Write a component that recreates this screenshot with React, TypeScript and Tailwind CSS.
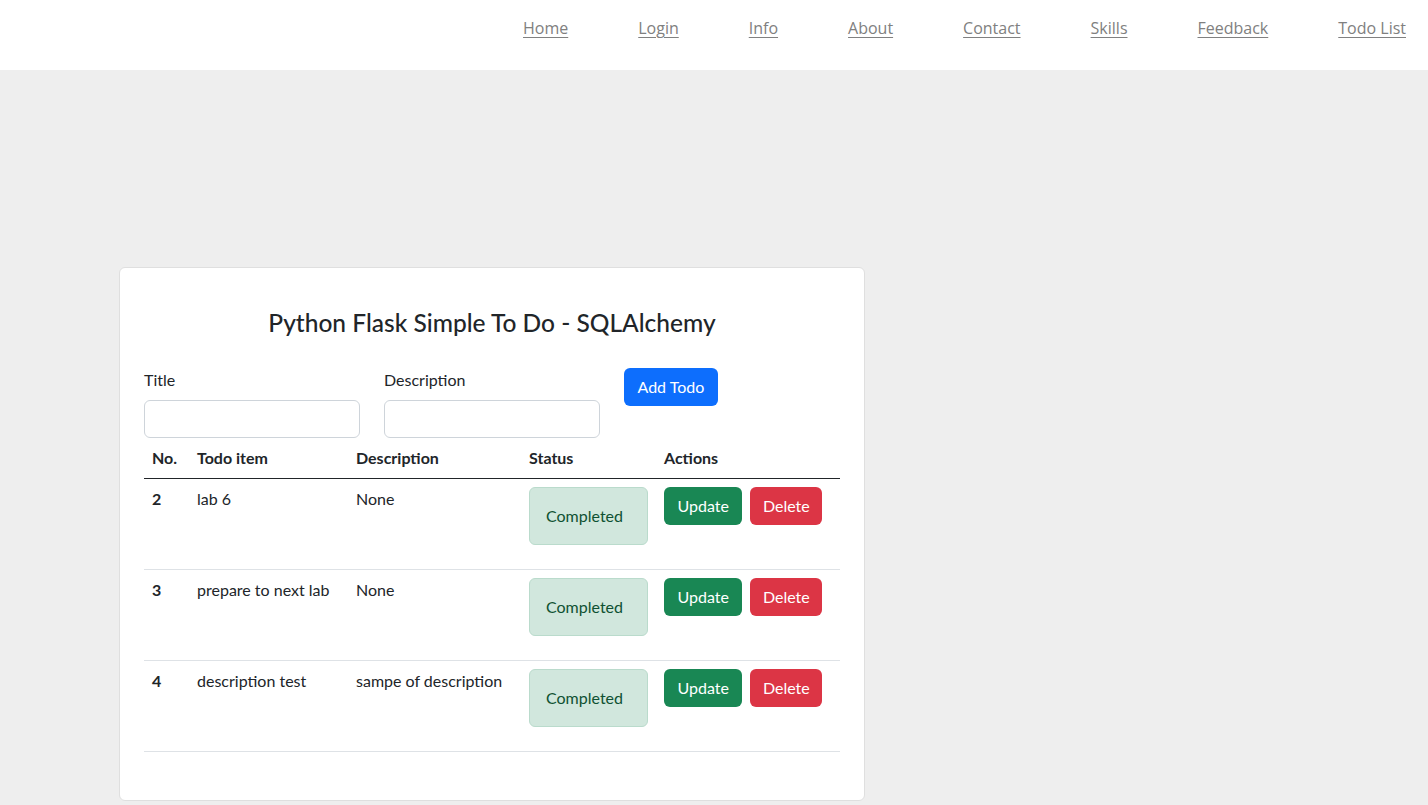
import React from 'react';

const navLinks = ['Home', 'Login', 'Info', 'About', 'Contact', 'Skills', 'Feedback', 'Todo List'];

const todos = [
    { id: 2, title: 'lab 6', description: 'None' },
    { id: 3, title: 'prepare to next lab', description: 'None' },
    { id: 4, title: 'description test', description: 'sampe of description' },
];

export default function App() {
    return (
        <div className="min-h-screen bg-[#eeeeee] text-[#212529] font-['Lato','Noto_Sans',sans-serif] text-base">
            <nav className="h-[70px] bg-white flex items-center justify-end gap-[70px] pr-[22px] pb-[14px]">
                {navLinks.map((link) => (
                    <a key={link} href="#" className="font-['Open_Sans',sans-serif] text-base text-[#808080] underline underline-offset-[3px]">
                        {link}
                    </a>
                ))}
            </nav>

            <div className="pt-[197px] pl-[119px]">
                <div className="w-[746px] bg-white border border-[#dfdfdf] rounded-[6px] px-6 pt-[40px] pb-[48px]">
                    <h3 className="text-center text-[24.5px] font-medium leading-[1.2] mb-[31px]">
                        Python Flask Simple To Do - SQLAlchemy
                    </h3>

                    <div className="flex gap-6">
                        <div className="w-[216px]">
                            <label className="block leading-6 mb-2">Title</label>
                            <input className="w-full h-[38px] border border-[#ced4da] rounded-[6px] px-3" />
                        </div>
                        <div className="w-[216px]">
                            <label className="block leading-6 mb-2">Description</label>
                            <input className="w-full h-[38px] border border-[#ced4da] rounded-[6px] px-3" />
                        </div>
                        <div>
                            <button className="h-[38px] px-[13.5px] bg-[#0d6efd] text-white rounded-[6px]">Add Todo</button>
                        </div>
                    </div>

                    <table className="w-full table-fixed border-collapse">
                        <thead>
                            <tr className="border-b border-[#212529]">
                                <th className="w-[45px] text-left font-bold p-2 leading-6">No.</th>
                                <th className="w-[159px] text-left font-bold p-2 leading-6">Todo item</th>
                                <th className="w-[173px] text-left font-bold p-2 leading-6">Description</th>
                                <th className="w-[135px] text-left font-bold p-2 leading-6">Status</th>
                                <th className="w-[184px] text-left font-bold p-2 leading-6">Actions</th>
                            </tr>
                        </thead>
                        <tbody>
                            {todos.map((todo) => (
                                <tr key={todo.id} className="border-b border-[#dee2e6] align-top">
                                    <td className="p-2 leading-6 font-bold">{todo.id}</td>
                                    <td className="p-2 leading-6">{todo.title}</td>
                                    <td className="p-2 leading-6">{todo.description}</td>
                                    <td className="p-2 leading-6">
                                        <div className="mb-4 p-4 border border-[#badbcc] bg-[#d1e7dd] text-[#0f5132] rounded-[6px]">
                                            Completed
                                        </div>
                                    </td>
                                    <td className="p-2 leading-6">
                                        <div className="flex gap-2">
                                            <button className="h-[38px] px-[13.5px] bg-[#198754] text-white rounded-[6px]">Update</button>
                                            <button className="h-[38px] px-[12.5px] bg-[#dc3545] text-white rounded-[6px]">Delete</button>
                                        </div>
                                    </td>
                                </tr>
                            ))}
                        </tbody>
                    </table>
                </div>
            </div>
        </div>
    );
}
